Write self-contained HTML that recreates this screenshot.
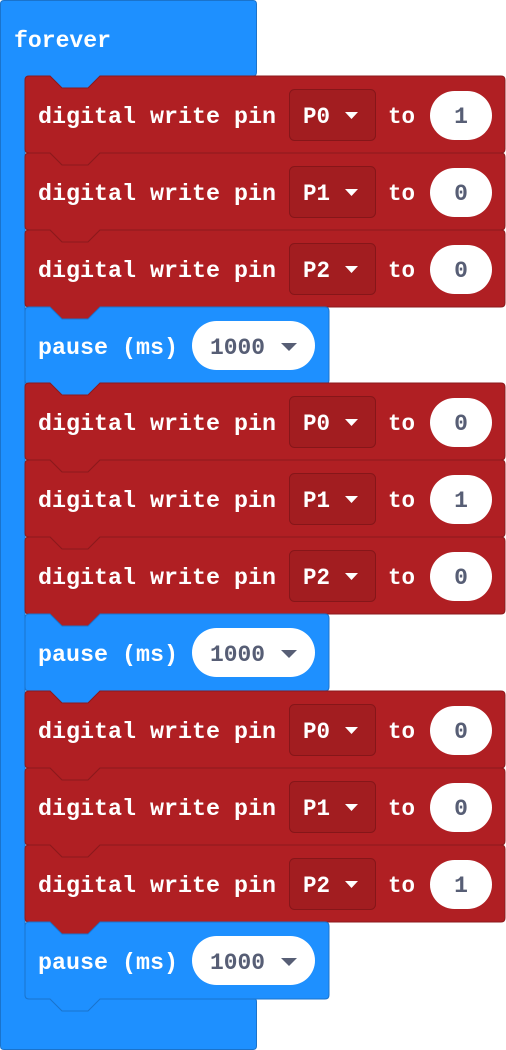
<!DOCTYPE html>
<html><head><meta charset="utf-8"><style>
html,body{margin:0;padding:0;background:#fff;width:506px;height:1050px;overflow:hidden}
svg{display:block}
text{font-family:"Liberation Mono",monospace;font-weight:bold;font-size:23px;fill:#fff}
.v{fill:#575e75}
</style></head><body>
<svg width="506" height="1050" viewBox="0 0 506 1050" xmlns="http://www.w3.org/2000/svg">
<defs>
<g id="red">
<path d="M29,0 H50 L62,12 H88 L100,0 H501 Q505,0 505,4 V73 Q505,77 501,77 H100 L88,89 H62 L50,77 H29 Q25,77 25,73 V4 Q25,0 29,0 Z" fill="#b01f23" stroke="#8c191c" stroke-width="1"/>
<text x="38" y="47" textLength="238" lengthAdjust="spacingAndGlyphs">digital write pin</text>
<rect x="289.5" y="13.5" width="86" height="51" rx="5" fill="#a21d20" stroke="#861619"/>
<text x="388" y="47" textLength="27" lengthAdjust="spacingAndGlyphs">to</text>
<rect x="430" y="15" width="62" height="49" rx="24.5" fill="#fff"/>
<path d="M345,36 h13 l-6.5,7 z" fill="#fff"/>
</g>
<g id="pause">
<path d="M29,0 H50 L62,12 H88 L100,0 H325 Q329,0 329,4 V73 Q329,77 325,77 H100 L88,89 H62 L50,77 H29 Q25,77 25,73 V4 Q25,0 29,0 Z" fill="#1e90ff" stroke="#1a73cc" stroke-width="1"/>
<text x="38" y="47" textLength="140" lengthAdjust="spacingAndGlyphs">pause (ms)</text>
<rect x="192" y="14" width="123" height="49" rx="24.5" fill="#fff"/>
<text class="v" x="210" y="47" textLength="55" lengthAdjust="spacingAndGlyphs">1000</text>
<path d="M281,36 h16 l-8,8 z" fill="#575e75"/>
</g>
</defs>
<path d="M4,0.5 H253 Q256.5,0.5 256.5,4 V72 Q256.5,76 253,76 H100 L88,88 H62 L50,76 H29 Q25,76 25,80 V994 Q25,998 29,998 H253 Q256.5,998 256.5,1002 V1046 Q256.5,1049.5 253,1049.5 H4 Q0.5,1049.5 0.5,1046 V4 Q0.5,0.5 4,0.5 Z" fill="#1e90ff" stroke="#1a73cc" stroke-width="1"/>
<text x="14" y="47" textLength="97" lengthAdjust="spacingAndGlyphs">forever</text>

<g transform="translate(0,76)"><use href="#red"/><text x="303" y="47" textLength="27" lengthAdjust="spacingAndGlyphs">P0</text><text class="v" x="461" y="47" text-anchor="middle">1</text></g>
<g transform="translate(0,153)"><use href="#red"/><text x="303" y="47" textLength="27" lengthAdjust="spacingAndGlyphs">P1</text><text class="v" x="461" y="47" text-anchor="middle">0</text></g>
<g transform="translate(0,230)"><use href="#red"/><text x="303" y="47" textLength="27" lengthAdjust="spacingAndGlyphs">P2</text><text class="v" x="461" y="47" text-anchor="middle">0</text></g>
<g transform="translate(0,307)"><use href="#pause"/></g>
<g transform="translate(0,383)"><use href="#red"/><text x="303" y="47" textLength="27" lengthAdjust="spacingAndGlyphs">P0</text><text class="v" x="461" y="47" text-anchor="middle">0</text></g>
<g transform="translate(0,460)"><use href="#red"/><text x="303" y="47" textLength="27" lengthAdjust="spacingAndGlyphs">P1</text><text class="v" x="461" y="47" text-anchor="middle">1</text></g>
<g transform="translate(0,537)"><use href="#red"/><text x="303" y="47" textLength="27" lengthAdjust="spacingAndGlyphs">P2</text><text class="v" x="461" y="47" text-anchor="middle">0</text></g>
<g transform="translate(0,614)"><use href="#pause"/></g>
<g transform="translate(0,691)"><use href="#red"/><text x="303" y="47" textLength="27" lengthAdjust="spacingAndGlyphs">P0</text><text class="v" x="461" y="47" text-anchor="middle">0</text></g>
<g transform="translate(0,768)"><use href="#red"/><text x="303" y="47" textLength="27" lengthAdjust="spacingAndGlyphs">P1</text><text class="v" x="461" y="47" text-anchor="middle">0</text></g>
<g transform="translate(0,845)"><use href="#red"/><text x="303" y="47" textLength="27" lengthAdjust="spacingAndGlyphs">P2</text><text class="v" x="461" y="47" text-anchor="middle">1</text></g>
<g transform="translate(0,922)"><use href="#pause"/></g>
</svg>
</body></html>
